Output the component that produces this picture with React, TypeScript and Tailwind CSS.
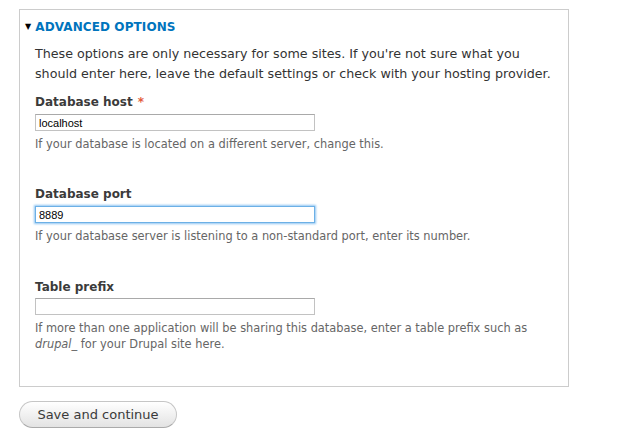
const sans = "font-['DejaVu_Sans',sans-serif]";

function Field({
  label,
  required,
  value,
  focused,
  help,
  labelGap,
  inputGap,
}: {
  label: string;
  required?: boolean;
  value: string;
  focused?: boolean;
  help: React.ReactNode;
  labelGap: string;
  inputGap: string;
}) {
  return (
    <div className={labelGap}>
      <label className="block text-[12px] leading-[18px] font-bold text-[#3b3b3b]">
        {label}
        {required && <span className="ml-[5px] text-[#e35c3a]">*</span>}
      </label>
      <input
        type="text"
        defaultValue={value}
        readOnly
        className={`${inputGap} block w-[280px] h-[17px] px-[3px] bg-white text-[11px] text-black font-['Liberation_Sans',Arial,sans-serif] outline-none ${
          focused
            ? "border border-[#6cb0e6] shadow-[0_0_2px_1px_#8ec5f2]"
            : "border border-[#c2c2c2] border-t-[#a9a9a9]"
        }`}
      />
      <div className="mt-[5px] text-[11.4px] leading-[16px] text-[#666]">{help}</div>
    </div>
  );
}

export default function App() {
  return (
    <div className={`${sans} bg-white w-[639px] h-[443px] pt-[9px] pl-[19px]`}>
      <div className="w-[550px] h-[378px] border border-[#cccccc] pt-[7px] px-[15px]">
        <div className="flex items-center h-[20px] -ml-[10px] text-[12px] font-bold text-[#0074bd] tracking-[0.1px]">
          <span className="text-[8px] text-black mr-[4px] leading-none">▼</span>
          ADVANCED OPTIONS
        </div>
        <p className="mt-[7px] text-[12.7px] leading-[20px] text-[#333] whitespace-nowrap">
          These options are only necessary for some sites. If you're not sure what you
          <br />
          should enter here, leave the default settings or check with your hosting provider.
        </p>
        <Field
          label="Database host"
          required
          value="localhost"
          help="If your database is located on a different server, change this."
          labelGap="mt-[9px]"
          inputGap="mt-[3px]"
        />
        <Field
          label="Database port"
          value="8889"
          focused
          help="If your database server is listening to a non-standard port, enter its number."
          labelGap="mt-[33px]"
          inputGap="mt-[3px]"
        />
        <Field
          label="Table prefix"
          value=""
          help={
            <>
              If more than one application will be sharing this database, enter a table prefix such as
              <br />
              <em>drupal_</em> for your Drupal site here.
            </>
          }
          labelGap="mt-[34px]"
          inputGap="mt-[2px]"
        />
      </div>
      <button className="mt-[14px] w-[158px] h-[27px] rounded-full border border-[#c6c6c6] border-b-[#aaaaaa] bg-gradient-to-b from-[#ffffff] to-[#e3e3e3] text-[13px] text-[#3a3a3a]">
        Save and continue
      </button>
    </div>
  );
}
